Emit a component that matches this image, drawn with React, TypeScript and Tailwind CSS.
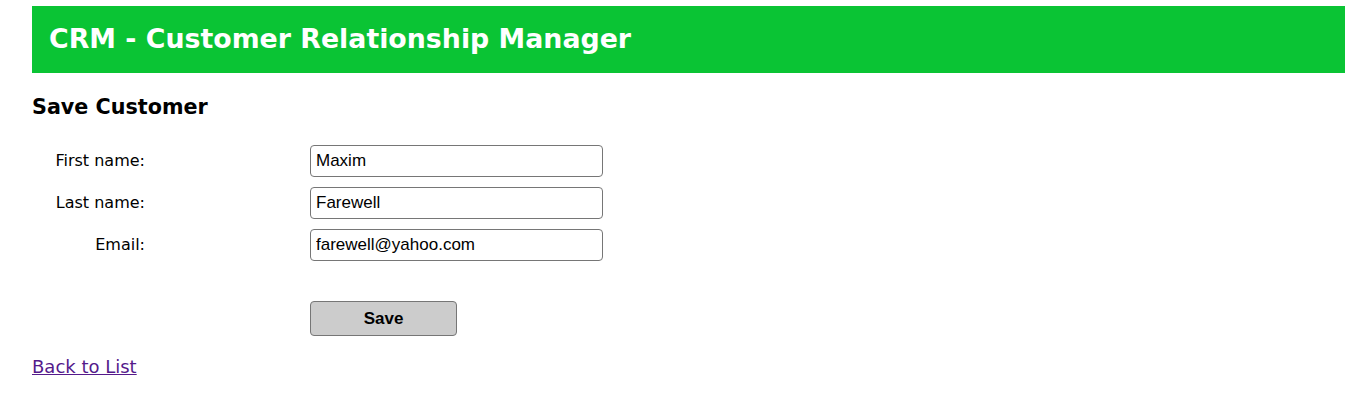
import React from 'react';

const fields = [
  { label: 'First name:', value: 'Maxim' },
  { label: 'Last name:', value: 'Farewell' },
  { label: 'Email:', value: 'farewell@yahoo.com' },
];

export default function App() {
  return (
    <div className="min-h-[409px] bg-white pl-8 pt-[6px] font-['DejaVu_Sans',sans-serif] text-black">
      {/* header */}
      <div className="flex h-[67px] items-center bg-[#0ac434] pl-[17px]">
        <h1 className="text-[26.8px] font-bold text-white">
          CRM - Customer Relationship Manager
        </h1>
      </div>

      <h2 className="mt-[22px] text-[20.7px] font-bold leading-[24px]">
        Save Customer
      </h2>

      <form className="mt-[26px]" onSubmit={e => e.preventDefault()}>
        <div className="flex flex-col gap-[10px]">
          {fields.map(f => (
            <div key={f.label} className="flex items-center">
              <label className="w-[113px] text-right text-[16px]">
                {f.label}
              </label>
              <input
                defaultValue={f.value}
                className="ml-[165px] h-[32px] w-[293px] rounded-[4px] border border-[#767676] px-[5px] text-[17px] font-['Liberation_Sans',sans-serif] outline-none"
              />
            </div>
          ))}
        </div>
        <button
          type="submit"
          className="ml-[278px] mt-[40px] h-[35px] w-[147px] rounded-[4px] border border-[#767676] bg-[#cccccc] text-[17px] font-bold font-['Liberation_Sans',sans-serif]"
        >
          Save
        </button>
      </form>

      <div className="mt-[17px]">
        <a href="#" className="text-[18px] text-[#551a8b] underline">
          Back to List
        </a>
      </div>
    </div>
  );
}
